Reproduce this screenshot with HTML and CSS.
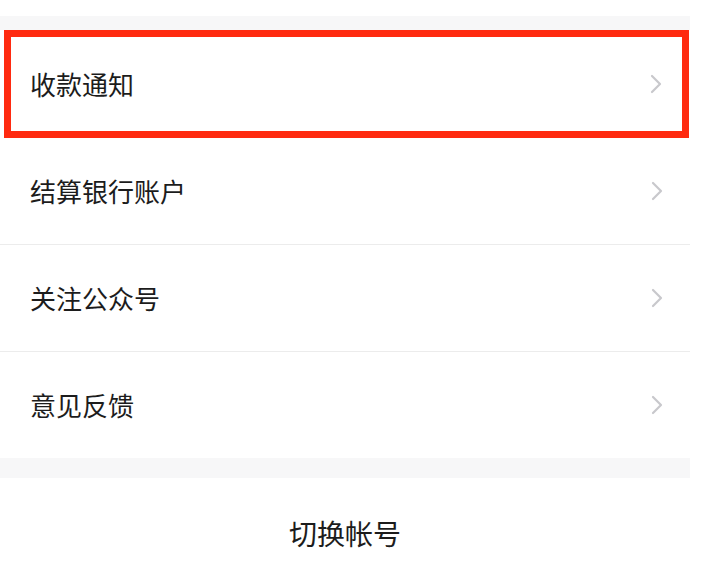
FILE: index.html
```html
<!DOCTYPE html>
<html lang="zh-CN">
<head>
    <meta charset="UTF-8">
    <meta name="viewport" content="width=device-width, initial-scale=1.0">
    <title>设置</title>
    <link rel="stylesheet" href="styles.css">
</head>
<body>

    <div class="page">
        <div class="gap top-gap"></div>

        <div class="menu">
            <div class="item marked">
                <span class="label">收款通知</span>
                <svg class="arrow" width="12" height="20" viewBox="0 0 12 20"><path d="M2 2 L10 10 L2 18" fill="none" stroke="#c8c8cc" stroke-width="2.2" stroke-linecap="round" stroke-linejoin="round"/></svg>
            </div>
            <div class="item">
                <span class="label">结算银行账户</span>
                <svg class="arrow" width="12" height="20" viewBox="0 0 12 20"><path d="M2 2 L10 10 L2 18" fill="none" stroke="#c8c8cc" stroke-width="2.2" stroke-linecap="round" stroke-linejoin="round"/></svg>
            </div>
            <div class="item">
                <span class="label">关注公众号</span>
                <svg class="arrow" width="12" height="20" viewBox="0 0 12 20"><path d="M2 2 L10 10 L2 18" fill="none" stroke="#c8c8cc" stroke-width="2.2" stroke-linecap="round" stroke-linejoin="round"/></svg>
            </div>
            <div class="item last">
                <span class="label">意见反馈</span>
                <svg class="arrow" width="12" height="20" viewBox="0 0 12 20"><path d="M2 2 L10 10 L2 18" fill="none" stroke="#c8c8cc" stroke-width="2.2" stroke-linecap="round" stroke-linejoin="round"/></svg>
            </div>
        </div>

        <div class="gap bottom-gap"></div>

        <div class="switch">切换帐号</div>
    </div>

</body>
</html>
```

FILE: styles.css
```css
body {
    margin: 0;
    background: #fff;
    font-family: "Noto Sans CJK SC", "Noto Sans", sans-serif;
    color: #1c1c1c;
}
.page {
    width: 690px;
    padding-top: 16px;
}
.gap {
    background: #f7f7f8;
}
.top-gap {
    height: 14px;
}
.bottom-gap {
    height: 20px;
}
.item {
    display: flex;
    align-items: center;
    justify-content: space-between;
    height: 106px;
    padding: 0 27px 0 30px;
    border-bottom: 1px solid #ececec;
}
.item.last {
    border-bottom: none;
}
.item.marked {
    height: 94px;
    margin-left: 4px;
    margin-right: 1px;
    padding: 0 20px 0 19px;
    border: 7px solid #ff2a10;
}
.label {
    font-size: 26px;
    line-height: 1;
}
.arrow {
    display: block;
}
.switch {
    height: 110px;
    display: flex;
    align-items: center;
    justify-content: center;
    font-size: 28px;
}
```
